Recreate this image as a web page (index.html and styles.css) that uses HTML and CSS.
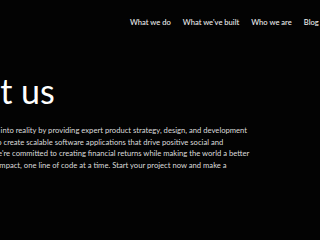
FILE: index.html
```html
<!DOCTYPE html>
<html lang="en">
<head>
<meta charset="utf-8">
<title>About us</title>
<link rel="stylesheet" href="styles.css">
</head>
<body>
<div class="page">
  <header class="topbar">
    <nav class="menu">
      <a class="menu-link" href="#">What we do</a>
      <a class="menu-link" href="#">What we've built</a>
      <a class="menu-link" href="#">Who we are</a>
      <a class="menu-link" href="#">Blog</a>
    </nav>
  </header>
  <main class="about">
    <h1 class="about-title">About us</h1>
    <p class="about-text">We bring your big ideas into reality by providing expert product strategy, design, and development<br>services. We help you to create scalable software applications that drive positive social and<br>environmental good. We're committed to creating financial returns while making the world a better<br>place. Join us, make an impact, one line of code at a time. Start your project now and make a<br>difference.</p>
  </main>
</div>
</body>
</html>
```
FILE: styles.css
```css
html, body {
  margin: 0;
  padding: 0;
  background: #030303;
  overflow: hidden;
}
.page {
  width: 320px;
  height: 240px;
  overflow: hidden;
  font-family: Lato, "Liberation Sans", sans-serif;
}
.topbar {
  display: flex;
  padding: 17px 0 0 130px;
  height: 13px;
}
.menu {
  display: flex;
  gap: 12px;
  white-space: nowrap;
}
.menu-link {
  color: #ececec;
  text-decoration: none;
  font-size: 7.6px;
  line-height: 11px;
  font-weight: 500;
}
.about {
  margin-left: -80px;
  padding-top: 41px;
  white-space: nowrap;
}
.about-title {
  margin: 0;
  font-size: 34px;
  line-height: 40px;
  font-weight: 400;
  color: #ffffff;
}
.about-text {
  margin: 14px 0 0 0;
  font-size: 7.65px;
  line-height: 11.7px;
  color: #dcdcdc;
}
```
